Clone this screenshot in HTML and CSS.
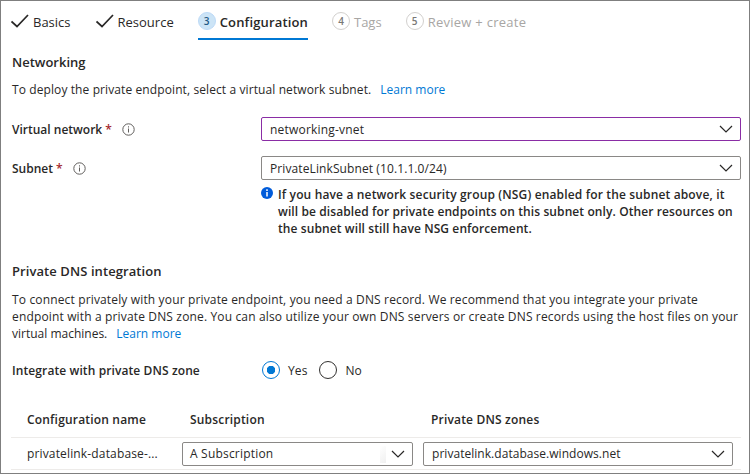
FILE: index.html
```
<!DOCTYPE html>
<html lang="en"><head><meta charset="utf-8"><title>Create a private endpoint</title><link rel="stylesheet" href="styles.css"></head>
<body><main class="panel">
<nav class="tabs">
<div class="tab done"><svg class="check" viewBox="0 0 18 14"><path d="M0.500 7.500 6 12.500 17 1"/></svg><span class="t-basics">Basics</span></div>
<div class="tab done"><svg class="check" viewBox="0 0 18 14"><path d="M0.500 7.500 6 12.500 17 1"/></svg><span class="t-resource">Resource</span></div>
<div class="tab active"><i class="num">3</i><span class="t-config">Configuration</span></div>
<div class="tab off"><i class="num">4</i><span>Tags</span></div>
<div class="tab off"><i class="num">5</i><span class="t-review">Review + create</span></div>
</nav>
<h2 class="net-title">Networking</h2>
<p class="intro"><span class="intro-text">To deploy the private endpoint, select a virtual network subnet.</span><a>Learn more</a></p>
<div class="row vnet"><label>Virtual network <b>*</b></label><svg class="info" viewBox="0 0 13 13"><circle cx="6.500" cy="6.500" r="5.700"/><path d="M6.500 5.500v4M6.500 3.300v1.200"/></svg><div class="select focus"><span class="vnet-name">networking-vnet</span><svg class="chev" viewBox="0 0 14 8"><path d="m1 1 6 6 6-6"/></svg></div></div>
<div class="row subnet"><label>Subnet <b>*</b></label><svg class="info" viewBox="0 0 13 13"><circle cx="6.500" cy="6.500" r="5.700"/><path d="M6.500 5.500v4M6.500 3.300v1.200"/></svg><div class="select"><span>PrivateLinkSubnet (10.1.1.0/24)</span><svg class="chev" viewBox="0 0 14 8"><path d="m1 1 6 6 6-6"/></svg></div></div>
<div class="note"><svg class="note-icon" viewBox="0 0 12 12"><circle cx="6" cy="6" r="6"/><path d="M6 5v4.500M6 2.300V4"/></svg><p><span class="note-first">If you have a network security group (NSG) enabled for the subnet above, it</span><br><span>will be disabled for private endpoints on this subnet only. Other resources on</span><br><span>the subnet will still have NSG enforcement.</span></p></div>
<h2 class="dns-title">Private DNS integration</h2>
<p class="desc"><span>To connect privately with your private endpoint, you need a DNS record. We recommend that you integrate your private</span><br><span>endpoint with a private DNS zone. You can also utilize your own DNS servers or create DNS records using the host files on your</span><br><span class="desc-last">virtual machines.</span><a>Learn more</a></p>
<div class="integrate"><label>Integrate with private DNS zone</label><i class="radio on"></i><span class="yes">Yes</span><i class="radio"></i><span>No</span></div>
<div class="grid head"><span>Configuration name</span><span>Subscription</span><span>Private DNS zones</span></div>
<div class="grid data"><span class="config">privatelink-database-...</span><div class="select sub"><span>A Subscription</span><i class="fade"></i><svg class="chev" viewBox="0 0 14 8"><path d="m1 1 6 6 6-6"/></svg></div><div class="select zone"><span>privatelink.database.windows.net</span><svg class="chev" viewBox="0 0 14 8"><path d="m1 1 6 6 6-6"/></svg></div></div>
</main></body></html>
```
FILE: styles.css
```
* { box-sizing: border-box; }
body { margin: 0; }
.panel { width: 750px; height: 474px; overflow: hidden; border: 1px solid #7f7f7f; padding: 0 8px 0 10px; font: 12px/17px "Open Sans", "Noto Sans", sans-serif; letter-spacing: .1px; color: #292827; background: #fff; white-space: nowrap; }
p, h2 { margin: 0; }
h2 { font-size: 13px; line-height: 18px; font-weight: 600; letter-spacing: .08px; }
.net-title, .intro, .row, .dns-title, .desc, .integrate { margin-left: 1px; }
svg { fill: none; stroke: currentColor; flex: none; }
a { color: #0078d4; }
.tabs { display: flex; height: 39px; font-size: 13px; letter-spacing: 0; margin-left: 0; }
.tab { display: flex; align-items: center; padding-top: 4px; margin-right: 24px; }
.done { margin-right: 25px; }
.done + .done { margin-right: 24px; }
.check { width: 18px; height: 14px; margin: -3px 4px 0 0; stroke-width: 1.700; }
.num { width: 18px; height: 18px; border-radius: 50%; border: 1px solid #d2d0ce; font: 600 10px/16px "Open Sans", sans-serif; text-align: center; margin: -4px 4px 0 0; }
.active { font-weight: 600; border-bottom: 2px solid #0078d4; padding-top: 6px; letter-spacing: .15px; }
.active .num { background: #cce4f6; border-color: #bddaf7; color: #235a85; }
.off { color: #a8a6a4; }
.off .num { color: #797775; }
.t-review { letter-spacing: .27px; }
.net-title { margin-top: 13px; letter-spacing: 0; }
.intro { margin-top: 10px; }
.intro a { margin-left: 9px; letter-spacing: 0; }
.row { display: flex; align-items: center; height: 24px; }
.row label { font-weight: 600; letter-spacing: 0; }
.row b { color: #a4262c; font-weight: 600; }
.info { width: 13px; height: 13px; margin-left: 10px; stroke: #605e5c; }
.select { display: flex; align-items: center; justify-content: space-between; height: 24px; border: 1px solid #8a8886; border-radius: 2px; padding: 0 7px 0 8px; }
.row .select { width: 480px; margin-left: auto; }
.row .focus { border-color: #8a2da5; }
.vnet-name { letter-spacing: .2px; }
.chev { width: 14px; height: 8px; stroke-width: 1.200; }
.vnet { margin-top: 19px; }
.subnet { margin-top: 15px; }
.note { display: flex; margin: 6px 0 0 250px; font-weight: 600; line-height: 17px; }
.note-first { letter-spacing: .15px; }
.note-icon { width: 12px; height: 12px; margin: 1px 5px 0 0; fill: #015cda; stroke: none; }
.note-icon path { stroke: #fff; stroke-width: 1.500; }
.dns-title { margin-top: 25px; }
.desc { margin-top: 11px; letter-spacing: .15px; }
.desc-last { letter-spacing: 0; }
.desc a { margin-left: 9px; letter-spacing: 0; }
.integrate { display: flex; align-items: center; margin-top: 19px; }
.integrate label { width: 250px; font-weight: 600; }
.radio { width: 18px; height: 18px; border: 1px solid #323130; border-radius: 50%; margin-right: 8px; }
.on { border-color: #0078d4; background: radial-gradient(circle, #0078d4 4px, transparent 4.500px); }
.yes { margin-right: 12px; }
.grid { display: grid; grid-template-columns: 145px 231px 310px; column-gap: 10px; padding-left: 16px; align-items: center; }
.head { font-weight: 600; margin-top: 32px; letter-spacing: .18px; }
.head span + span { padding-left: 8px; }
.data { margin-top: 9px; height: 33px; border: solid #edebe9; border-width: 1px 0; }
.config { letter-spacing: .15px; }
.sub { letter-spacing: .2px; padding-left: 7px; }
.fade { width: 6px; height: 17px; margin: 1px 5px 0 auto; background: linear-gradient(135deg, #fff, #f0f0f0); }
.zone { letter-spacing: .04px; }
```
